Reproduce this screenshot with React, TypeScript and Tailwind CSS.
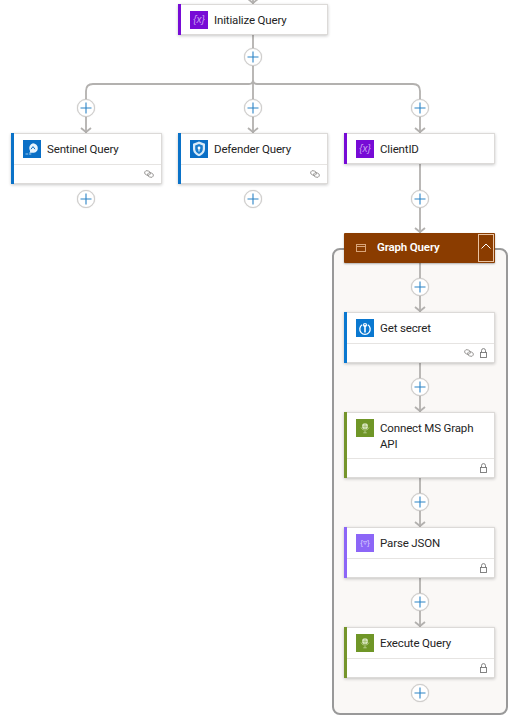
import React from "react";

function Plus({ pos }: { pos: string }) {
  return (
    <div className={`absolute ${pos} w-[18px] h-[18px] rounded-full bg-white border border-[#cfcdcb] shadow-[0_0_1px_rgba(0,0,0,0.25)] flex items-center justify-center`}>
      <svg width="12" height="12" viewBox="0 0 12 12">
        <path d="M6 0.500v11M0.500 6h11" stroke="#2b83c6" strokeWidth="1.100" />
      </svg>
    </div>
  );
}

function LinkIcon() {
  return (
    <svg width="10" height="8" viewBox="0 0 10 8" fill="none" stroke="#8f8d8b" strokeWidth="0.800">
      <ellipse cx="3.500" cy="3" rx="3" ry="2.200" transform="rotate(20 3.500 3)" />
      <ellipse cx="6.500" cy="5" rx="3" ry="2.200" transform="rotate(20 6.500 5)" />
    </svg>
  );
}

function LockIcon() {
  return (
    <svg width="7" height="10" viewBox="0 0 7 10" fill="none" stroke="#777" strokeWidth="0.900">
      <path d="M1.500 4.500V2.600a2 2 0 0 1 4 0v1.900" />
      <rect x="0.500" y="4.500" width="6" height="5" />
    </svg>
  );
}

function VarIcon() {
  return (
    <div className="w-[18px] h-[18px] bg-[#770bd6] flex items-center justify-center text-[10px] italic text-[#c9a0f0] font-['Liberation_Sans',sans-serif] leading-none">
      {"{x}"}
    </div>
  );
}

function SentinelIcon() {
  return (
    <svg width="18" height="18" viewBox="0 0 18 18">
      <rect width="18" height="18" fill="#0a6fc6" />
      <path d="M10 3.200a5 5 0 0 1 4.800 5c0 2.800-2.200 4.600-4.800 4.600H6.200c1-.8 1.200-2 .5-2.600A5 5 0 0 1 10 3.200z" fill="#eaf4fc" />
      <path d="M8 9.200l2-2.600 2 2.600" stroke="#0a6fc6" strokeWidth="1" fill="none" />
      <rect x="2.500" y="13.500" width="2.500" height="1" fill="#9cc9ec" />
      <rect x="5.800" y="13.500" width="2.500" height="1" fill="#9cc9ec" />
    </svg>
  );
}

function ShieldIcon() {
  return (
    <svg width="18" height="18" viewBox="0 0 18 18">
      <rect width="18" height="18" fill="#0a6fc6" />
      <path d="M9 1.500l6 2.200v5c0 3.800-2.500 6-6 7.500-3.500-1.500-6-3.700-6-7.500v-5z" fill="#d9ebf8" />
      <path d="M9 4l3.800 1.400V9c0 2.300-1.500 3.900-3.800 5C6.700 12.900 5.200 11.300 5.200 9V5.400z" fill="#1a7ccc" />
      <circle cx="9" cy="8" r="1.400" fill="#fff" />
      <path d="M8.500 8.500h1v3h-1z" fill="#fff" />
    </svg>
  );
}

function KeyIcon() {
  return (
    <svg width="18" height="18" viewBox="0 0 18 18">
      <rect width="18" height="18" fill="#0a78d0" />
      <path d="M6.200 5.800a5.200 5.200 0 1 0 5.600 0" fill="none" stroke="#fff" strokeWidth="1.300" />
      <circle cx="9" cy="6" r="2.100" fill="#fff" />
      <circle cx="9" cy="5.500" r="0.700" fill="#0a78d0" />
      <path d="M8.200 7h1.600v6.500H8.200z" fill="#fff" />
    </svg>
  );
}

function GlobeIcon() {
  return (
    <svg width="18" height="18" viewBox="0 0 18 18">
      <rect width="18" height="18" fill="#6f9627" />
      <circle cx="9" cy="7.300" r="3" fill="#dbe8c4" />
      <path d="M6.200 7.300h5.600M9 4.300v6" stroke="#8fb050" strokeWidth="0.600" />
      <path d="M5 8.500a4.300 4.300 0 0 0 8 0" fill="none" stroke="#c4d8a0" strokeWidth="0.700" />
      <path d="M9 12v1.500M7.300 13.800h3.400" stroke="#c4d8a0" strokeWidth="0.800" />
    </svg>
  );
}

function ParseIcon() {
  return (
    <div className="w-[18px] h-[18px] bg-[#8c66f7] flex items-center justify-center text-[8px] text-[#d9ccff] font-['Liberation_Sans',sans-serif] leading-none">
      {"{▿}"}
    </div>
  );
}

function Card({
  pos,
  accent,
  icon,
  title,
  footer,
  headClass,
}: {
  pos: string;
  accent: string;
  icon: React.ReactNode;
  title: React.ReactNode;
  footer?: React.ReactNode;
  headClass?: string;
}) {
  const head = headClass ?? (footer ? "h-[30px]" : "h-[29px]");
  return (
    <div className={`absolute ${pos} bg-white border border-[#dcdad8] border-l-0 shadow-[0_1px_3px_rgba(0,0,0,0.22)] flex`}>
      <div className="w-[3px] shrink-0 -my-[1px]">
        <div className={`w-full h-full ${accent}`} />
      </div>
      <div className="flex-1 min-w-0">
        <div className={`${head} flex items-start pl-[9px] pr-[16px] pt-[6px] gap-[6px]`}>
          <div className="shrink-0">{icon}</div>
          <div className="text-[11.5px] tracking-[-0.15px] leading-[16px] pt-[1px] text-[#242424]">{title}</div>
        </div>
        {footer && (
          <div className="h-[19px] border-t border-[#e6e4e2] flex items-center justify-end gap-[6px] pr-[7px]">
            {footer}
          </div>
        )}
      </div>
    </div>
  );
}

export default function App() {
  const stroke = "#b3b1af";
  const arrows = [
    [253, 4],
    [86, 133],
    [253, 133],
    [420, 133],
    [420, 233],
    [420, 312],
    [420, 412],
    [420, 527],
    [420, 627],
  ];
  return (
    <div className="relative w-[525px] h-[721px] bg-white overflow-hidden font-['Roboto','Noto_Sans',sans-serif]">
      <div className="absolute left-[332px] top-[248px] w-[176px] h-[467px] rounded-[8px] border-2 border-[#999999] bg-[#faf8f6]" />
      <svg className="absolute left-0 top-0" width="525" height="721" fill="none">
        <path
          d="M253 0V4M253 35V133M86 133V91Q86 84 93 84H249Q253 84 253 80M420 133V91Q420 84 413 84H257Q253 84 253 80M420 164V233M420 263V312M420 362V412M420 478V527M420 578V627"
          stroke={stroke}
          strokeWidth="1.800"
        />
        {arrows.map(([x, y]) => (
          <path key={`${x}-${y}`} d={`M${x - 5} ${y - 5}L${x} ${y - 1}L${x + 5} ${y - 5}`} stroke={stroke} strokeWidth="1.800" />
        ))}
      </svg>

      <Card pos="left-[178px] top-[4px] w-[150px]" accent="bg-[#770bd6]" icon={<VarIcon />} title="Initialize Query" />
      <Card
        pos="left-[11px] top-[133px] w-[151px]"
        accent="bg-[#0a72c8]"
        icon={<SentinelIcon />}
        title="Sentinel Query"
        footer={<LinkIcon />}
      />
      <Card
        pos="left-[178px] top-[133px] w-[150px]"
        accent="bg-[#0a72c8]"
        icon={<ShieldIcon />}
        title="Defender Query"
        footer={<LinkIcon />}
      />
      <Card pos="left-[344px] top-[133px] w-[151px]" accent="bg-[#770bd6]" icon={<VarIcon />} title="ClientID" />

      <div className="absolute left-[344px] top-[233px] w-[151px] h-[30px] bg-[#8a3c00] rounded-[1px] shadow-[0_1px_2px_rgba(0,0,0,0.3)] flex items-center text-white">
        <svg className="ml-[12px]" width="10" height="8" viewBox="0 0 10 8" fill="none" stroke="#d9a57a" strokeWidth="1">
          <rect x="0.500" y="0.500" width="9" height="7" />
          <path d="M0.500 2.500h9" />
        </svg>
        <span className="ml-[11px] text-[11.5px] tracking-[-0.15px] font-semibold">Graph Query</span>
        <div className="ml-auto mr-[1px] w-[16px] h-[28px] border border-[#e9c4a4] flex items-start justify-center pt-[8px]">
          <svg width="10" height="6" viewBox="0 0 10 6" fill="none" stroke="#fff" strokeWidth="1">
            <path d="M0.500 5.500L5 1l4.500 4.500" />
          </svg>
        </div>
      </div>

      <Card
        pos="left-[344px] top-[312px] w-[151px]"
        accent="bg-[#0a78d0]"
        icon={<KeyIcon />}
        title="Get secret"
        footer={
          <>
            <LinkIcon />
            <LockIcon />
          </>
        }
      />
      <Card
        pos="left-[344px] top-[412px] w-[151px]"
        accent="bg-[#75952b]"
        icon={<GlobeIcon />}
        title="Connect MS Graph API"
        headClass="h-[45px]"
        footer={<LockIcon />}
      />
      <Card
        pos="left-[344px] top-[527px] w-[151px]"
        accent="bg-[#8c66f7]"
        icon={<ParseIcon />}
        title="Parse JSON"
        footer={<LockIcon />}
      />
      <Card
        pos="left-[344px] top-[627px] w-[151px]"
        accent="bg-[#75952b]"
        icon={<GlobeIcon />}
        title="Execute Query"
        footer={<LockIcon />}
      />

      <Plus pos="left-[244px] top-[48px]" />
      <Plus pos="left-[77px] top-[99px]" />
      <Plus pos="left-[244px] top-[99px]" />
      <Plus pos="left-[411px] top-[99px]" />
      <Plus pos="left-[77px] top-[190px]" />
      <Plus pos="left-[244px] top-[190px]" />
      <Plus pos="left-[411px] top-[190px]" />
      <Plus pos="left-[411px] top-[278px]" />
      <Plus pos="left-[411px] top-[378px]" />
      <Plus pos="left-[411px] top-[493px]" />
      <Plus pos="left-[411px] top-[593px]" />
      <Plus pos="left-[411px] top-[684px]" />
    </div>
  );
}
